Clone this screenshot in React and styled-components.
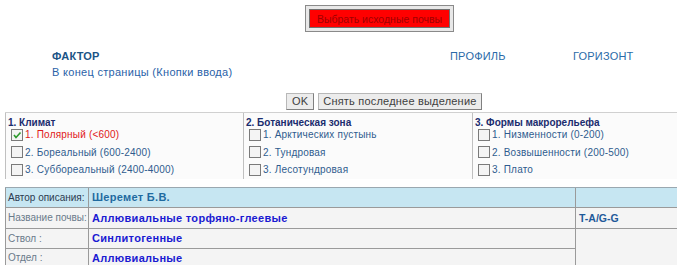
import React from 'react';
import styled, { createGlobalStyle } from 'styled-components';

const GlobalStyle = createGlobalStyle`
  html, body {
    margin: 0;
    padding: 0;
    background: #ffffff;
    font-family: "Liberation Sans", Arial, sans-serif;
    font-size: 11px;
  }
`;

const Page = styled.div`
  width: 677px;
  height: 265px;
  overflow: hidden;
`;

const TopBar = styled.div`
  display: flex;
  padding: 5px 0 0 305px;
  height: 32px;
  box-sizing: border-box;
`;

const SourceButton = styled.button`
  width: 149px;
  height: 27px;
  padding: 3px;
  border: 1px solid #8a8a8a;
  background: #e8e8e8;
  box-sizing: border-box;
  display: flex;
`;

const SourceFace = styled.span`
  flex: 1;
  background: #ff0000;
  border: 1px solid #707070;
  color: #a00000;
  font-family: "Liberation Sans", Arial, sans-serif;
  font-size: 10.5px;
  display: flex;
  align-items: center;
  justify-content: center;
`;

const NavRow = styled.div`
  display: grid;
  grid-template-columns: 398px 123px 1fr;
  padding: 18px 0 0 52px;
`;

const NavCol = styled.div`
  display: flex;
  flex-direction: column;
  gap: 4px;
`;

const NavTitle = styled.span`
  color: ${p => (p.$bold ? '#1b5486' : '#2a6aa8')};
  font-weight: ${p => (p.$bold ? 700 : 400)};
  font-size: 11px;
  line-height: 12px;
  letter-spacing: 0.2px;
`;

const NavLink = styled.span`
  color: #2a62a8;
  font-size: 11px;
  line-height: 12px;
  letter-spacing: 0.3px;
`;

const ActionRow = styled.div`
  display: flex;
  gap: 4px;
  padding: 15px 0 0 286px;
`;

const GrayButton = styled.button`
  height: 17px;
  padding: 0 ${p => p.$pad}px;
  background: #ececec;
  border: 1px solid #b8b8b8;
  border-right-color: #808080;
  border-bottom-color: #808080;
  color: #404040;
  font-family: "Liberation Sans", Arial, sans-serif;
  font-size: 11px;
  line-height: 15px;
  letter-spacing: 0.2px;
`;

const Panels = styled.div`
  display: grid;
  grid-template-columns: 238px 229px 1fr;
  margin: 2px 0 0 5px;
  border-top: 1px solid #d0d0d0;
`;

const Panel = styled.div`
  border-left: 1px solid #c0c0c0;
  background: #fbfbfb;
  padding: 4px 0 0 2px;
  display: flex;
  flex-direction: column;
`;

const PanelTitle = styled.div`
  color: #1a2c6e;
  font-weight: 700;
  font-size: 10px;
  line-height: 12px;
  margin-bottom: -3px;
`;

const Option = styled.label`
  display: flex;
  align-items: center;
  gap: 2px;
  height: 17.5px;
  flex: none;
  padding-left: 3px;
  color: ${p => (p.$active ? '#e01818' : '#2f5b8e')};
  font-size: 10px;
  letter-spacing: 0.2px;
`;

const Box = styled.span`
  width: 10px;
  height: 10px;
  border: 1px solid #7a7a7a;
  background: #f4f4f4;
  display: inline-flex;
  align-items: center;
  justify-content: center;
  flex: none;
`;

const Table = styled.div`
  display: grid;
  grid-template-columns: 83px 487px 1fr;
  grid-template-rows: 20px 21px 20px 19px;
  margin: 8px 0 0 5px;
  border-top: 1px solid #9aa8b0;
`;

const Label = styled.div`
  background: ${p => (p.$head ? '#c6e6f2' : '#f4f4f4')};
  border-left: 1px solid #9a9a9a;
  border-bottom: 1px solid #9a9a9a;
  color: ${p => (p.$head ? '#2c3a50' : '#6a7a8a')};
  font-size: 10px;
  padding-left: 2px;
  display: flex;
  align-items: center;
`;

const Value = styled.div`
  background: ${p => (p.$head ? '#c6e6f2' : '#f4f4f4')};
  border-left: 1px solid #9a9a9a;
  border-bottom: 1px solid #9a9a9a;
  color: ${p => (p.$head ? '#1f6aa0' : '#1a1ad2')};
  font-weight: 700;
  font-size: 11px;
  letter-spacing: 0.3px;
  padding-left: 3px;
  display: flex;
  align-items: center;
`;

const Code = styled.div`
  background: ${p => (p.$head ? '#c6e6f2' : '#f4f4f4')};
  border-left: 1px solid #9a9a9a;
  border-bottom: 1px solid #9a9a9a;
  color: #1f5a9a;
  font-weight: 700;
  font-size: 10.5px;
  padding-left: 3px;
  display: flex;
  align-items: center;
  grid-row: ${p => p.$span || 'auto'};
`;

const panels = [
  {
    title: '1. Климат',
    items: ['1. Полярный (<600)', '2. Бореальный (600-2400)', '3. Суббореальный (2400-4000)'],
    checked: 0,
  },
  {
    title: '2. Ботаническая зона',
    items: ['1. Арктических пустынь', '2. Тундровая', '3. Лесотундровая'],
  },
  {
    title: '3. Формы макрорельефа',
    items: ['1. Низменности (0-200)', '2. Возвышенности (200-500)', '3. Плато'],
  },
];

const Check = () => (
  <svg width="10" height="10" viewBox="0 0 10 10">
    <path d="M2 5 L4 7.5 L8.5 2.5" fill="none" stroke="#2e9a2e" strokeWidth="1.6" />
  </svg>
);

export default function App() {
  return (
    <Page>
      <GlobalStyle />
      <TopBar>
        <SourceButton>
          <SourceFace>Выбрать исходные почвы</SourceFace>
        </SourceButton>
      </TopBar>

      <NavRow>
        <NavCol>
          <NavTitle $bold>ФАКТОР</NavTitle>
          <NavLink>В конец страницы (Кнопки ввода)</NavLink>
        </NavCol>
        <NavCol>
          <NavTitle>ПРОФИЛЬ</NavTitle>
        </NavCol>
        <NavCol>
          <NavTitle>ГОРИЗОНТ</NavTitle>
        </NavCol>
      </NavRow>

      <ActionRow>
        <GrayButton $pad={5}>OK</GrayButton>
        <GrayButton $pad={4}>Снять последнее выделение</GrayButton>
      </ActionRow>

      <Panels>
        {panels.map(p => (
          <Panel key={p.title}>
            <PanelTitle>{p.title}</PanelTitle>
            {p.items.map((item, i) => (
              <Option key={item} $active={p.checked === i}>
                <Box>{p.checked === i && <Check />}</Box>
                {item}
              </Option>
            ))}
          </Panel>
        ))}
      </Panels>

      <Table>
        <Label $head>Автор описания:</Label>
        <Value $head>Шеремет Б.В.</Value>
        <Code $head />
        <Label>Название почвы:</Label>
        <Value>Аллювиальные торфяно-глеевые</Value>
        <Code>T-A/G-G</Code>
        <Label>Ствол :</Label>
        <Value>Синлитогенные</Value>
        <Code $span="span 2" />
        <Label>Отдел :</Label>
        <Value>Аллювиальные</Value>
      </Table>
    </Page>
  );
}
